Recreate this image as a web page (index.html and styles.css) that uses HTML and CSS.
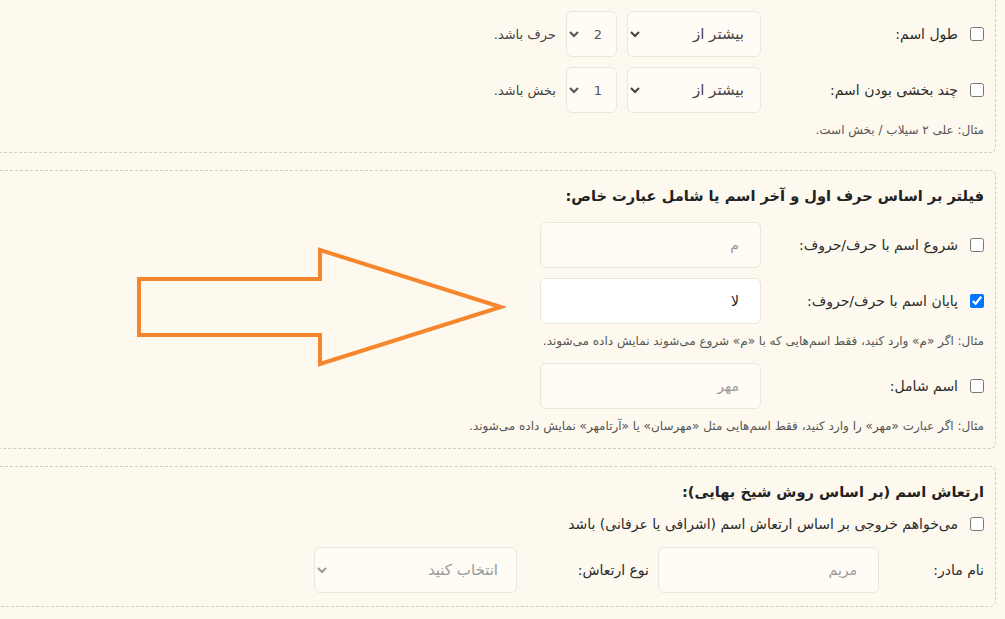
FILE: index.html
```html
<!DOCTYPE html>
<html lang="fa" dir="rtl">
<head>
  <meta charset="UTF-8">
  <meta name="viewport" content="width=device-width, initial-scale=1.0">
  <title>فیلتر اسم</title>
  <link rel="stylesheet" href="styles.css">
</head>
<body>
  <div class="page">

    <section class="box box-first">
      <div class="opt">
        <label class="check"><input type="checkbox"><span>طول اسم:</span></label>
        <select class="sel sel-cmp"><option>بیشتر از</option><option>کمتر از</option></select>
        <select class="sel sel-num"><option>2</option><option>3</option></select>
        <span class="unit">حرف باشد.</span>
      </div>
      <div class="opt">
        <label class="check"><input type="checkbox"><span>چند بخشی بودن اسم:</span></label>
        <select class="sel sel-cmp"><option>بیشتر از</option><option>کمتر از</option></select>
        <select class="sel sel-num"><option>1</option><option>2</option></select>
        <span class="unit">بخش باشد.</span>
      </div>
      <p class="hint">مثال: علی ۲ سیلاب / بخش است.</p>
    </section>

    <section class="box">
      <h3>فیلتر بر اساس حرف اول و آخر اسم یا شامل عبارت خاص:</h3>
      <div class="opt">
        <label class="check"><input type="checkbox"><span>شروع اسم با حرف/حروف:</span></label>
        <input class="field" type="text" placeholder="م">
      </div>
      <div class="opt">
        <label class="check"><input type="checkbox" checked><span>پایان اسم با حرف/حروف:</span></label>
        <input class="field filled" type="text" value="لا">
      </div>
      <p class="hint">مثال: اگر «م» وارد کنید، فقط اسم‌هایی که با «م» شروع می‌شوند نمایش داده می‌شوند.</p>
      <div class="opt">
        <label class="check"><input type="checkbox"><span>اسم شامل:</span></label>
        <input class="field" type="text" placeholder="مهر">
      </div>
      <p class="hint">مثال: اگر عبارت «مهر» را وارد کنید، فقط اسم‌هایی مثل «مهرسان» یا «آرتامهر» نمایش داده می‌شوند.</p>
    </section>

    <section class="box">
      <h3>ارتعاش اسم (بر اساس روش شیخ بهایی):</h3>
      <label class="check check-line"><input type="checkbox"><span>می‌خواهم خروجی بر اساس ارتعاش اسم (اشرافی یا عرفانی) باشد</span></label>
      <div class="vib">
        <span class="vib-label">نام مادر:</span>
        <input class="field" type="text" placeholder="مریم">
        <span class="vib-label vib-type">نوع ارتعاش:</span>
        <select class="sel sel-type"><option>انتخاب کنید</option><option>اشرافی</option><option>عرفانی</option></select>
      </div>
    </section>

    <svg class="arrow" width="370" height="122" viewBox="0 0 370 122">
      <polygon points="3,32 184,32 184,3 365,60 184,117 184,88 3,88" fill="none" stroke="#f5862d" stroke-width="4" stroke-linejoin="miter"/>
    </svg>
  </div>
</body>
</html>
```

FILE: styles.css
```css
:root {
  --bg: #fef9ee;
  --line: #d2cdc3;
  --field-border: #ebe6dc;
  --field-bg: #fffcf6;
  --text: #2b2b2b;
  --muted: #555;
}

html, body {
  margin: 0;
  background-color: var(--bg);
  color: var(--text);
  font-family: "DejaVu Sans", "Noto Sans", sans-serif;
  font-size: 14px;
}

.page {
  position: relative;
  padding-right: 9px;
}

.box {
  border: 1px dashed var(--line);
  border-left: none;
  border-radius: 0 6px 6px 0;
  padding: 12px 11px 13px 0;
  margin-bottom: 17px;
}

.box-first {
  border-top: none;
  border-radius: 0 0 6px 0;
  padding-top: 11px;
}

.box h3 {
  margin: 0 0 13px;
  font-size: 14.6px;
  line-height: 26px;
  font-weight: bold;
  color: #222;
}

.opt {
  display: flex;
  align-items: center;
  gap: 10px;
  margin-bottom: 10px;
}

.check {
  display: flex;
  align-items: center;
  gap: 12px;
  width: 213px;
  flex-shrink: 0;
  font-size: 14px;
}

.check input {
  margin: 0;
  width: 14px;
  height: 14px;
}

.check-line {
  width: auto;
  line-height: 20px;
  margin: -4px 0 13px;
}

.sel,
.field {
  height: 46px;
  box-sizing: border-box;
  border: 1px solid var(--field-border);
  border-radius: 6px;
  background-color: var(--field-bg);
  color: #444;
  font-family: inherit;
  font-size: 15px;
  outline: none;
}

.sel {
  padding: 0 12px;
}

.sel-cmp {
  width: 134px;
  padding-right: 12px;
}

.sel-num {
  padding: 0 10px;
  font-size: 13px;
  color: #555;
}

.field {
  width: 221px;
  padding: 0 21px;
  font-size: 14px;
}

.field::placeholder {
  color: #999;
}

.field.filled {
  background-color: #fff;
  color: #222;
}

.unit {
  font-size: 13px;
  color: #444;
}

.hint {
  margin: -2px 0 13px;
  font-size: 12px;
  line-height: 18px;
  color: var(--muted);
}

.box .hint:last-child {
  margin-bottom: 0;
}

.vib {
  display: flex;
  align-items: center;
  gap: 9px;
}

.vib-label {
  width: 96px;
  font-size: 14px;
}

.vib-type {
  width: 123px;
}

.sel-type {
  width: 203px;
  color: #999;
  padding-right: 14px;
}

.arrow {
  position: absolute;
  left: 136px;
  top: 247px;
}
```
